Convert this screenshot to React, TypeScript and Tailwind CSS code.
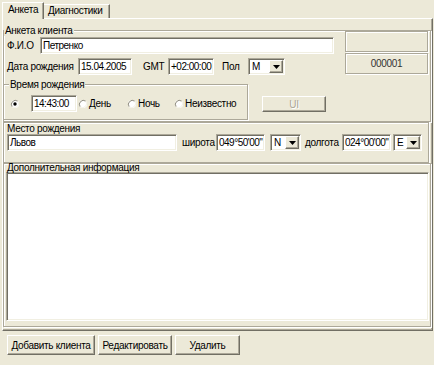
import React from 'react';

const sunken =
  'border border-t-[#ACA899] border-l-[#ACA899] border-r-white border-b-white shadow-[inset_1px_1px_0_#716F64,inset_-1px_-1px_0_#F1EFE2]';
const raised =
  'border border-t-white border-l-white border-r-[#716F64] border-b-[#716F64] shadow-[inset_-1px_-1px_0_#ACA899]';
const etched = 'border border-[#ACA899] shadow-[inset_1px_1px_0_#fff,1px_1px_0_#fff]';

function Edit({ value, className = '' }: { value?: string; className?: string }) {
  return (
    <div
      className={`h-[17px] shrink-0 bg-white ${sunken} flex items-center pl-[2px] tracking-[-0.5px] overflow-hidden whitespace-nowrap ${className}`}
    >
      {value}
    </div>
  );
}

function Combo({ value, className = '' }: { value: string; className?: string }) {
  return (
    <div className={`h-[17px] shrink-0 bg-white ${sunken} flex p-[1px] ${className}`}>
      <span className="flex-1 pl-[2px] leading-[13px]">{value}</span>
      <div className={`w-[14px] h-full bg-[#ECE9D8] ${raised} flex items-center justify-center`}>
        <svg width="7" height="4" viewBox="0 0 7 4">
          <path d="M0 0h7L3.5 4z" fill="#000" />
        </svg>
      </div>
    </div>
  );
}

function Radio({ checked }: { checked?: boolean }) {
  return (
    <svg width="10" height="10" viewBox="0 0 10 10" className="shrink-0">
      <circle cx="5" cy="5" r="4" fill="#fff" />
      <path d="M2.2 7.8 A4 4 0 0 1 7.8 2.2" fill="none" stroke="#8E8B7E" strokeWidth="1" />
      <path d="M7.8 2.2 A4 4 0 0 1 2.2 7.8" fill="none" stroke="#F4F2E8" strokeWidth="1" />
      {checked && <circle cx="5" cy="5" r="1.7" fill="#000" />}
    </svg>
  );
}

function Legend({ children, indent }: { children: React.ReactNode; indent: string }) {
  return (
    <div className={`-mt-[7px] h-[13px] leading-[13px] ${indent}`}>
      <span className="bg-[#ECE9D8] px-[1px]">{children}</span>
    </div>
  );
}

function Button({ children, className = '', disabled }: { children: React.ReactNode; className?: string; disabled?: boolean }) {
  return (
    <div
      className={`shrink-0 bg-[#ECE9D8] ${raised} flex items-center justify-center ${
        disabled ? 'text-[#ACA899] [text-shadow:1px_1px_0_#fff]' : ''
      } ${className}`}
    >
      {children}
    </div>
  );
}

export default function App() {
  return (
    <div className="w-[434px] h-[365px] bg-[#ECE9D8] text-[10px] tracking-[-0.3px] text-black font-['Liberation_Sans',Arial,sans-serif] overflow-hidden select-none">
      {/* tabs */}
      <div className="h-[18px] pl-[2px] flex items-end">
        <div className="relative z-10 -mb-[1px] h-[17px] w-[42px] bg-[#ECE9D8] border-t border-l border-r border-t-white border-l-white border-r-[#716F64] shadow-[inset_-1px_0_0_#ACA899] pl-[5px] pt-[1px] leading-[12px]">
          Анкета
        </div>
        <div className="h-[14px] w-[66px] border-t border-r border-t-white border-r-[#716F64] shadow-[inset_-1px_0_0_#ACA899] pl-[4px] leading-[12px]">
          Диагностики
        </div>
      </div>

      {/* tab page */}
      <div className="ml-[2px] w-[431px] h-[313px] border border-t-white border-l-white border-r-[#716F64] border-b-[#716F64] shadow-[inset_-1px_-1px_0_#ACA899]">
        {/* Анкета клиента */}
        <div className={`mt-[11px] w-[428px] h-[92px] ${etched} flex`}>
          <div className="w-[331px] flex flex-col">
            <Legend indent="ml-0">Анкета клиента</Legend>

            <div className="h-[17px] flex items-center">
              <span className="w-[36px] pl-[3px]">Ф.И.О</span>
              <Edit value="Петренко" className="w-[294px]" />
            </div>

            <div className="mt-[4px] h-[17px] flex items-center">
              <span className="w-[74px] pl-[3px] whitespace-nowrap">Дата рождения</span>
              <Edit value="15.04.2005" className="w-[54px]" />
              <span className="w-[36px] pl-[11px]">GMT</span>
              <Edit value="+02:00:00" className="w-[46px]" />
              <span className="w-[34px] pl-[8px]">Пол</span>
              <Combo value="M" className="w-[37px]" />
            </div>

            <div className="mt-[9px] flex items-start">
              <div className={`-ml-[1px] w-[245px] h-[36px] ${etched} flex flex-col`}>
                <Legend indent="ml-[5px]">Время рождения</Legend>
                <div className="mt-[4px] h-[17px] flex items-center">
                  <span className="ml-[6px] flex">
                    <Radio checked />
                  </span>
                  <Edit value="14:43:00" className="ml-[11px] w-[46px]" />
                  <div className="w-[50px] flex items-center">
                    <span className="ml-[1px] flex">
                      <Radio />
                    </span>
                    <span className="ml-[1px]">День</span>
                  </div>
                  <div className="w-[47px] flex items-center">
                    <Radio />
                    <span className="ml-[1px]">Ночь</span>
                  </div>
                  <div className="flex items-center">
                    <Radio />
                    <span className="ml-[1px]">Неизвестно</span>
                  </div>
                </div>
              </div>
              <Button disabled className="ml-[14px] mt-[12px] w-[64px] h-[16px]">
                UI
              </Button>
            </div>
          </div>

          <div className="ml-auto mr-[2px] w-[83px] flex flex-col">
            <div className={`h-[21px] ${etched}`} />
            <div className={`mt-[1px] h-[21px] ${etched} flex items-center justify-center text-[#333]`}>
              000001
            </div>
          </div>
        </div>

        {/* Место рождения */}
        <div className={`w-[426px] h-[41px] ${etched}`}>
          <div className="h-[11px] leading-[11px] pl-[3px]">Место рождения</div>
          <div className="h-[17px] flex items-center">
            <Edit value="Львов" className="ml-[3px] w-[170px]" />
            <span className="w-[39px] pl-[5px]">широта</span>
            <Edit value={'049°50\'00"'} className="w-[49px]" />
            <Combo value="N" className="ml-[5px] w-[31px]" />
            <span className="w-[41px] pl-[4px]">долгота</span>
            <Edit value={'024°00\'00"'} className="w-[49px]" />
            <Combo value="E" className="ml-[2px] w-[29px]" />
          </div>
        </div>

        {/* Дополнительная информация */}
        <div className={`w-[428px] h-[164px] ${etched}`}>
          <div className="h-[8px] leading-[8px] pl-[3px]">Дополнительная информация</div>
          <div className={`ml-[2px] w-[423px] h-[149px] bg-white ${sunken}`} />
        </div>
      </div>

      {/* buttons */}
      <div className="mt-[4px] pl-[7px] flex gap-[3px]">
        <Button className="w-[88px] h-[20px]">Добавить клиента</Button>
        <Button className="w-[74px] h-[20px]">Редактировать</Button>
        <Button className="w-[65px] h-[20px]">Удалить</Button>
      </div>
    </div>
  );
}
